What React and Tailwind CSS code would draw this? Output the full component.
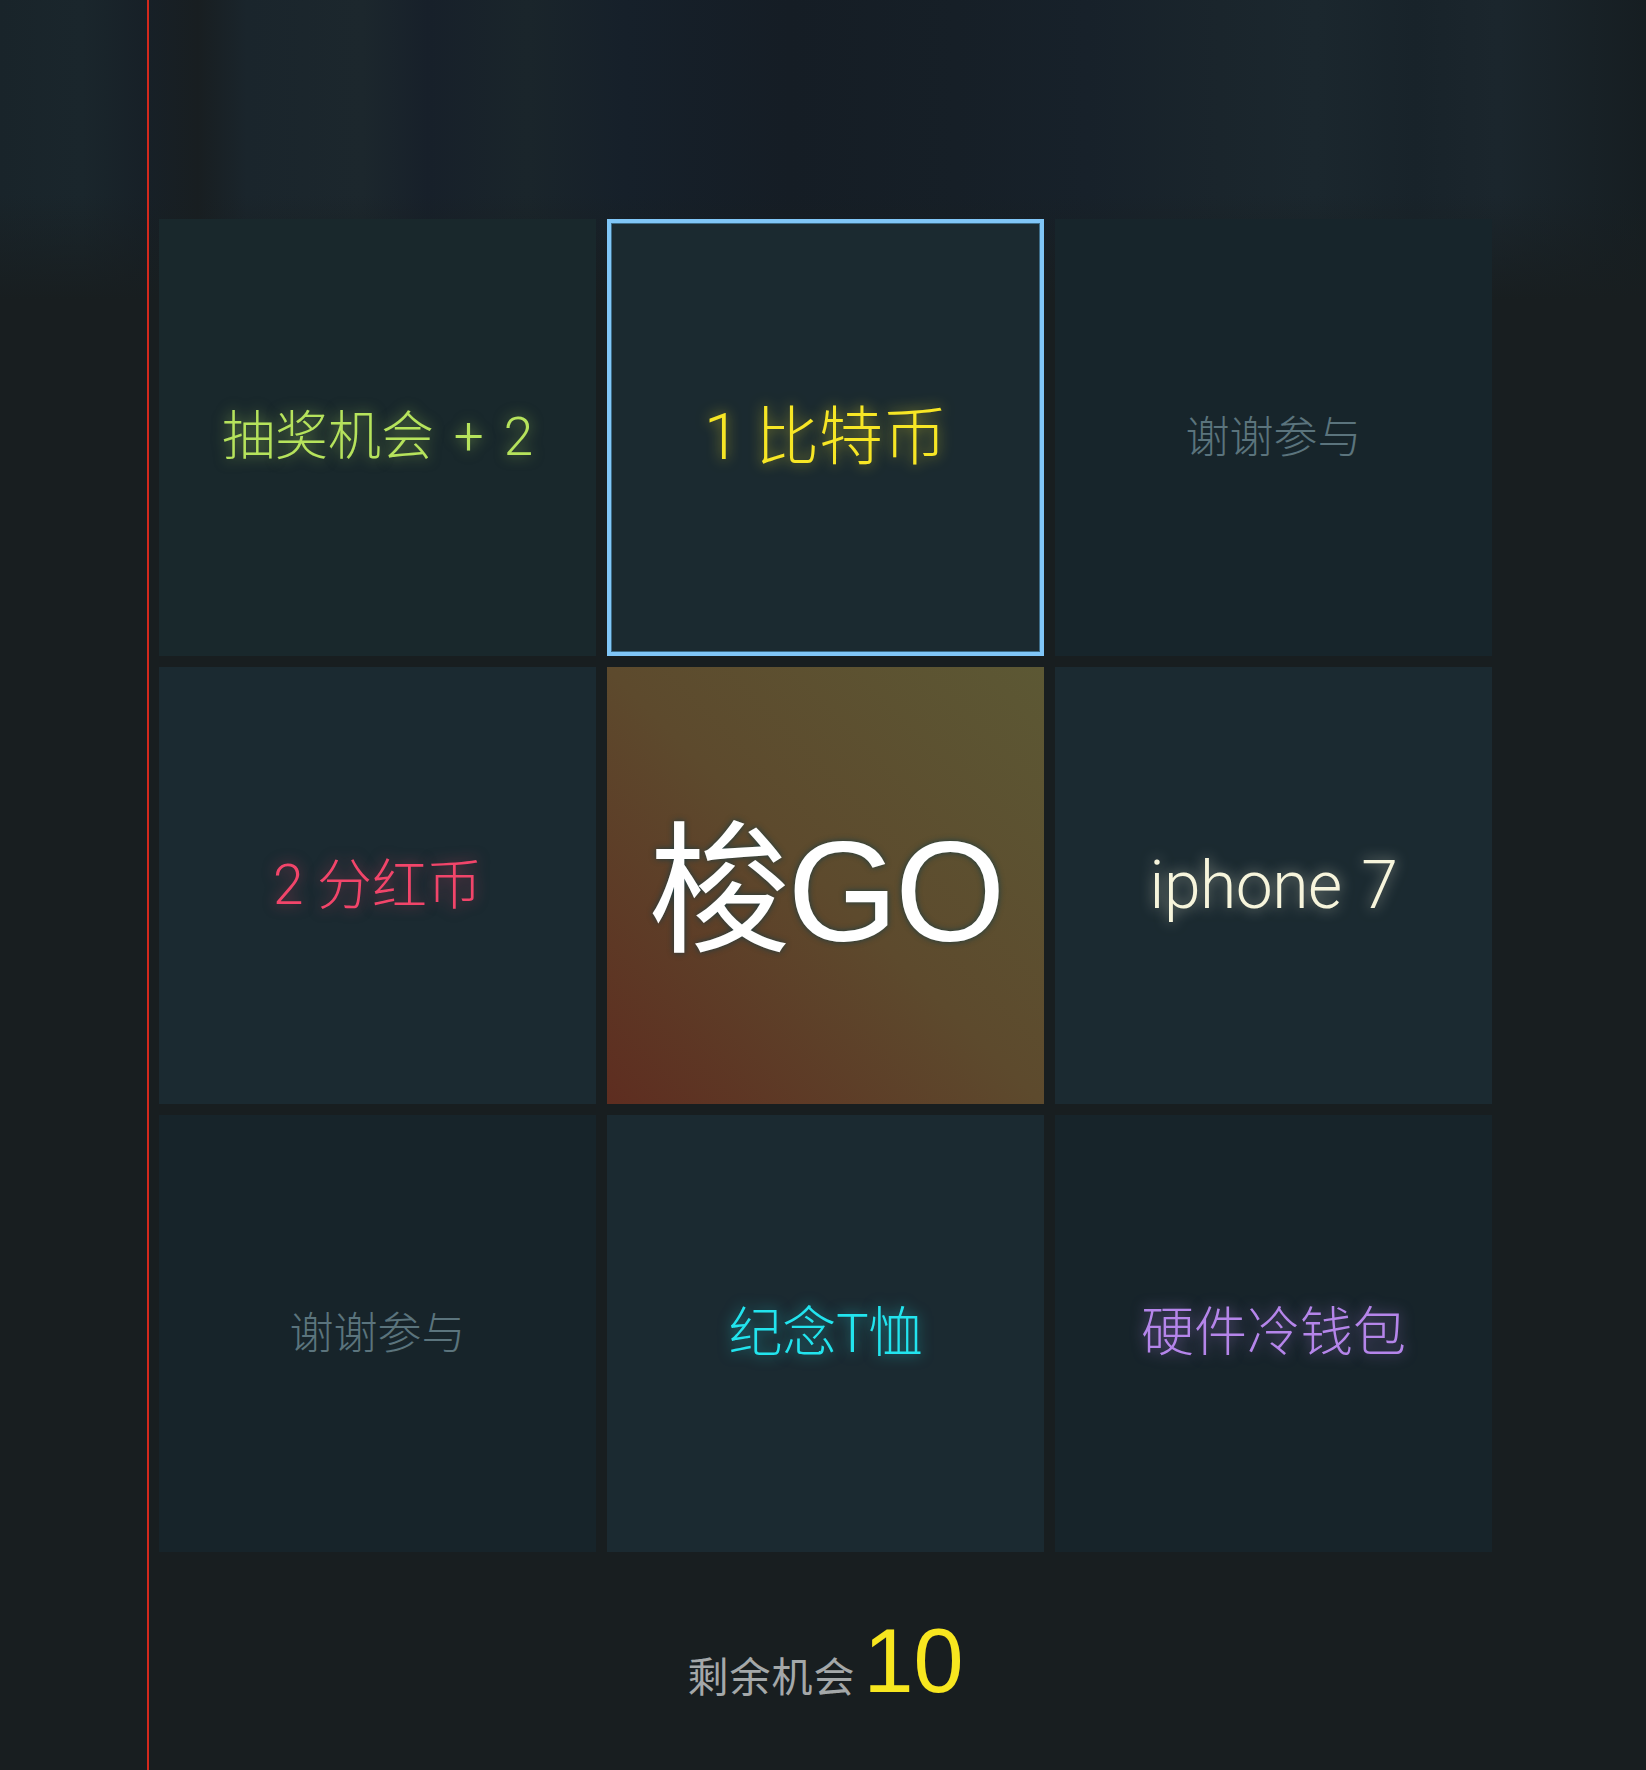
const cells = [
    { text: "抽奖机会 + 2", bg: "bg-[#19282c]", cls: "text-[53px] text-[#b6e35c] [word-spacing:7px] [text-shadow:0_0_14px_rgba(182,227,92,0.55)]" },
    { text: "1 比特币", bg: "bg-[#1b2a30]", cls: "text-[64px] text-[#f7e625] [text-shadow:0_0_14px_rgba(247,230,37,0.6)]", active: true },
    { text: "谢谢参与", bg: "bg-[#17252b]", cls: "text-[44px] text-[#5b747d]" },
    { text: "2 分红币", bg: "bg-[#1b2a31]", cls: "text-[55px] text-[#f2456a] [text-shadow:0_0_14px_rgba(242,69,106,0.5)]" },
    { center: true },
    { text: "iphone 7", bg: "bg-[#1b2a31]", cls: "text-[66px] text-[#f7f5dc] tracking-[-0.5px] [word-spacing:4px] [text-shadow:0_0_14px_rgba(247,245,220,0.55)]" },
    { text: "谢谢参与", bg: "bg-[#17242a]", cls: "text-[44px] text-[#5b747d]" },
    { text: "纪念T恤", bg: "bg-[#1b2a31]", cls: "text-[54px] text-[#22e4ee] [text-shadow:0_0_14px_rgba(34,228,238,0.55)]" },
    { text: "硬件冷钱包", bg: "bg-[#17242a]", cls: "text-[53px] text-[#b585ea] [text-shadow:0_0_14px_rgba(181,133,234,0.55)]" },
];

const Cell = ({ cell }) => {
    if (cell.center) {
        return (
            <div className="h-[437px] flex items-center justify-center bg-[linear-gradient(to_top_right,#5e2d20_0%,#5d4a2d_50%,#5c5834_100%)]">
                <span className="text-[142px] leading-none text-white tracking-[-3px] font-['Liberation_Sans','Noto_Sans_CJK_SC',sans-serif] [text-shadow:0_0_6px_rgba(20,60,70,0.9)] pt-[12px]">
                    梭GO
                </span>
            </div>
        );
    }

    return (
        <div
            className={`h-[437px] flex items-center justify-center ${cell.bg} ${
                cell.active ? "border-4 border-[#80c6f7] shadow-[inset_0_0_0_1px_#3d6c88]" : ""
            }`}
        >
            <span className={`leading-none font-light font-['Roboto','Noto_Sans_CJK_SC',sans-serif] ${cell.cls}`}>
                {cell.text}
            </span>
        </div>
    );
};

export default function App() {
    return (
        <div className="min-h-[1770px] w-full flex bg-[#181e20] bg-no-repeat bg-[length:100%_300px] bg-[image:linear-gradient(to_bottom,rgba(24,30,32,0)_0%,rgba(24,30,32,0)_65%,#181e20_100%),linear-gradient(90deg,#19242a_0%,#1a262c_5%,#172027_9%,#181e21_12%,#1a252c_15%,#1c272d_22%,#17202a_26%,#1a252b_32%,#16202a_38%,#151d25_48%,#161f27_58%,#17212a_66%,#1a252c_74%,#1b272e_80%,#18232a_86%,#1b262d_91%,#161e22_100%)]">
            {/* gutter */}
            <div className="w-[147px] shrink-0" />

            {/* main column */}
            <div className="flex-1 flex flex-col border-l-2 border-[#d3291d]">
                <div className="h-[219px]" />

                <div className="pl-[10px]">
                    <div className="grid grid-cols-[repeat(3,437px)] gap-[11px]">
                        {cells.map((c, i) => (
                            <Cell key={i} cell={c} />
                        ))}
                    </div>
                </div>

                {/* remaining chances */}
                <div className="w-[1343px] flex justify-center items-baseline pt-[64px] pl-[10px]">
                    <span className="text-[41px] leading-none text-[#a4a8a9] font-['Noto_Sans_CJK_SC',sans-serif] tracking-[1px]">
                        剩余机会
                    </span>
                    <span className="ml-[8px] text-[90px] leading-none text-[#f7e61f] font-['Liberation_Sans',sans-serif]">
                        10
                    </span>
                </div>
            </div>
        </div>
    );
}
